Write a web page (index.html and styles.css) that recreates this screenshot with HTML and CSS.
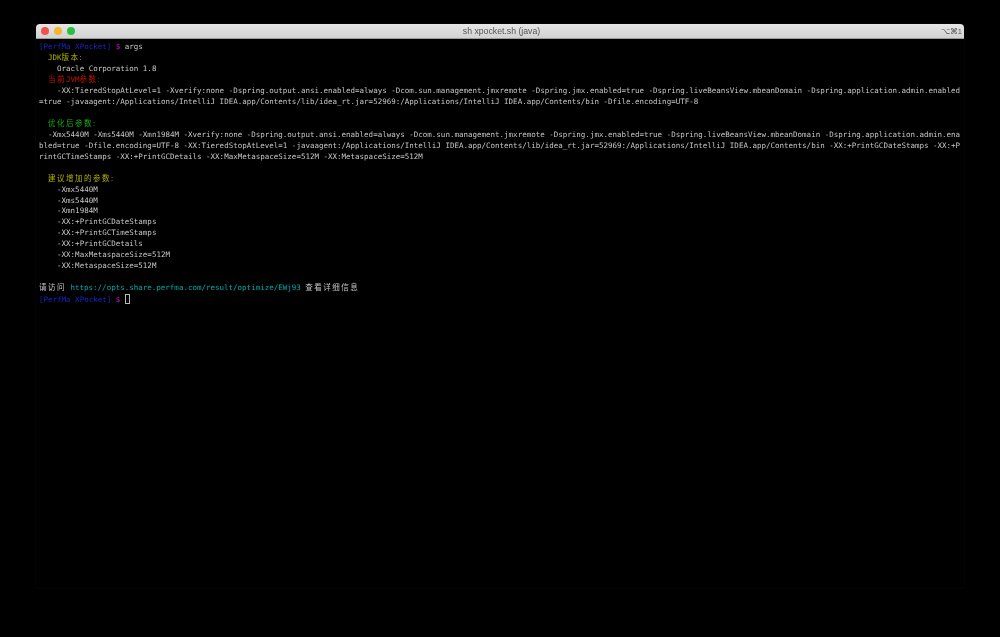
FILE: index.html
```html
<!DOCTYPE html>
<html lang="zh">
<head>
<meta charset="utf-8">
<title>sh xpocket.sh (java)</title>
<link rel="stylesheet" href="styles.css">
</head>
<body>
<main class="window">
<header class="titlebar">
<div class="lights"><span class="light red"></span><span class="light yellow"></span><span class="light green"></span></div>
<div class="title">sh xpocket.sh (java)</div>
<div class="shortcut">⌥⌘1</div>
</header>
<pre class="term"><span class="blue">[PerfMa XPocket]</span> <span class="magenta">$</span> args
  <span class="yellow-t">JDK<span class="cjk">版本:</span></span>
    Oracle Corporation 1.8
  <span class="red-t"><span class="cjk">当前</span>JVM<span class="cjk">参数:</span></span>
    -XX:TieredStopAtLevel=1 -Xverify:none -Dspring.output.ansi.enabled=always -Dcom.sun.management.jmxremote -Dspring.jmx.enabled=true -Dspring.liveBeansView.mbeanDomain -Dspring.application.admin.enabled
=true -javaagent:/Applications/IntelliJ IDEA.app/Contents/lib/idea_rt.jar=52969:/Applications/IntelliJ IDEA.app/Contents/bin -Dfile.encoding=UTF-8

  <span class="green-t"><span class="cjk">优化后参数:</span></span>
  -Xmx5440M -Xms5440M -Xmn1984M -Xverify:none -Dspring.output.ansi.enabled=always -Dcom.sun.management.jmxremote -Dspring.jmx.enabled=true -Dspring.liveBeansView.mbeanDomain -Dspring.application.admin.ena
bled=true -Dfile.encoding=UTF-8 -XX:TieredStopAtLevel=1 -javaagent:/Applications/IntelliJ IDEA.app/Contents/lib/idea_rt.jar=52969:/Applications/IntelliJ IDEA.app/Contents/bin -XX:+PrintGCDateStamps -XX:+P
rintGCTimeStamps -XX:+PrintGCDetails -XX:MaxMetaspaceSize=512M -XX:MetaspaceSize=512M

  <span class="yellow-t"><span class="cjk">建议增加的参数:</span></span>
    -Xmx5440M
    -Xms5440M
    -Xmn1984M
    -XX:+PrintGCDateStamps
    -XX:+PrintGCTimeStamps
    -XX:+PrintGCDetails
    -XX:MaxMetaspaceSize=512M
    -XX:MetaspaceSize=512M

<span class="cjk">请访问</span> <span class="cyan">https://opts.share.perfma.com/result/optimize/EWj93</span> <span class="cjk">查看详细信息</span>
<span class="blue">[PerfMa XPocket]</span> <span class="magenta">$</span> <span class="cursor"></span></pre>
</main>
</body>
</html>
```
FILE: styles.css
```css
html, body {
  margin: 0;
  background: #000;
}
body {
  height: 637px;
  box-sizing: border-box;
  padding: 24px 36px 49px;
  overflow: hidden;
}
.window {
  height: 100%;
  display: flex;
  flex-direction: column;
  background: #000;
  border-radius: 4px 4px 0 0;
  box-shadow: 0 0 0 1px #050505;
  filter: blur(0.6px);
}
.titlebar {
  flex: none;
  height: 15px;
  box-sizing: border-box;
  display: grid;
  grid-template-columns: 1fr auto 1fr;
  align-items: center;
  padding: 0 2px 0 5px;
  background: linear-gradient(#e6e6e6, #d2d2d2);
  border-bottom: 1px solid #9c9c9c;
  border-radius: 4px 4px 0 0;
  font-family: "Liberation Sans", Arial, sans-serif;
  font-size: 8.7px;
  color: #555;
}
.lights {
  display: flex;
  gap: 5px;
}
.light {
  width: 8px;
  height: 8px;
  border-radius: 50%;
}
.red { background: #f0524f; }
.yellow { background: #f6b52e; }
.green { background: #27c13e; }
.shortcut {
  justify-self: end;
  font-size: 7.5px;
}
.term {
  margin: 0;
  padding: 3.2px 0 0 3px;
  font-family: "DejaVu Sans Mono", "Noto Sans CJK SC", monospace;
  font-size: 7.5px;
  line-height: 10.95px;
  color: #c6c6c6;
  white-space: pre;
}
.cjk {
  font-family: "Noto Sans CJK SC", sans-serif;
  letter-spacing: 1.5px;
  line-height: 0;
}
.blue { color: #1a24c8; }
.magenta { color: #c818c8; }
.yellow-t { color: #b0b000; }
.red-t { color: #c41400; }
.green-t { color: #12b012; }
.cyan { color: #00aaaa; }
.cursor {
  display: inline-block;
  width: 5px;
  height: 10px;
  vertical-align: -2px;
  box-shadow: inset 0 0 0 1px #b8b8b8;
}
```
